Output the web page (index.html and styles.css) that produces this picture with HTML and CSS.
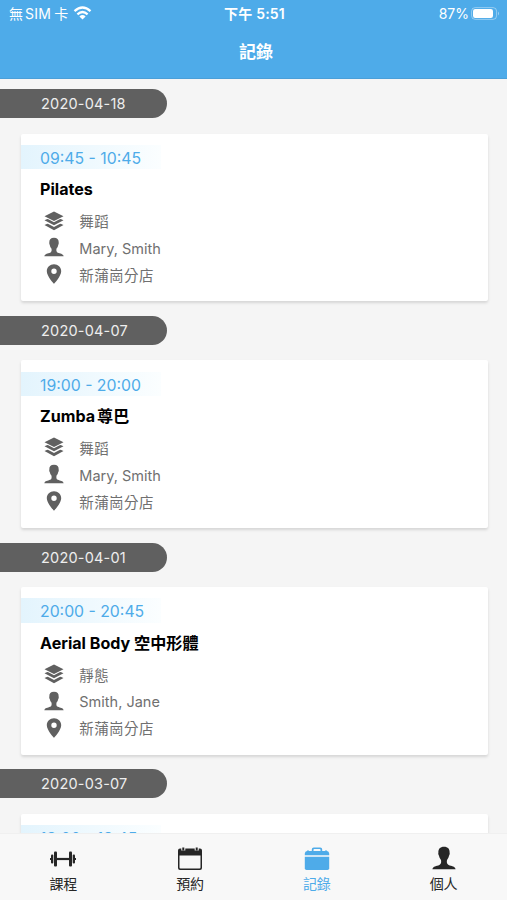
FILE: index.html
```
<!DOCTYPE html>
<html lang="zh-Hant">
<head>
    <meta charset="UTF-8">
    <meta name="viewport" content="width=device-width, initial-scale=1.0">
    <title>記錄</title>
    <link rel="stylesheet" href="styles.css">
</head>
<body>
    <svg class="sprite" width="0" height="0">
        <symbol id="icon-layers" viewBox="0 0 20 20">
            <path d="M10 .5 19.500 5.300 10 10.100 .5 5.300z"/>
            <path d="M.5 9.300 3.300 8Q5 8.300 10 11.200Q15 8.300 16.700 8L19.500 9.300 10 14.300z"/>
            <path d="M.5 14 3.300 12.700Q5 13 10 15.900Q15 13 16.700 12.700L19.500 14 10 19.200z"/>
        </symbol>
        <symbol id="icon-person" viewBox="0 0 24 24">
            <path d="M12 .8C8 .8 6.200 3.200 6.400 6.500C6 7.500 6.500 9 7 9.800C7.400 12 8.400 13 9 14C9.400 16.300 9.200 18 7.400 18.900C4.500 20.200 1 19.900 .4 23.200H23.600C23 19.900 19.500 20.200 16.600 18.900C14.800 18 14.600 16.300 15 14C15.600 13 16.600 12 17 9.800C17.500 9 18 7.500 17.600 6.500C17.800 3.200 16 .8 12 .8z"/>
        </symbol>
        <symbol id="icon-pin" viewBox="0 0 20 20">
            <path fill-rule="evenodd" d="M10 .3C6 .3 2.800 3.400 2.800 7.200C2.800 12.300 10 19.700 10 19.700S17.200 12.300 17.200 7.200C17.200 3.400 14 .3 10 .3zM10 4.500a2.700 2.700 0 1 1 0 5.400a2.700 2.700 0 1 1 0-5.400z"/>
        </symbol>
    </svg>

    <header class="header">
        <div class="status-bar">
            <div class="carrier">
                <span class="carrier-name">無<span class="sim">SIM</span>卡</span>
                <svg class="wifi" viewBox="0 0 18 14">
                    <path d="M1 5.200Q9-2.100 17 5.200M3.900 8.300Q9 3.700 14.100 8.300" fill="none" stroke="#fff" stroke-width="2.300"/>
                    <path d="M9 13.500 5.900 10.400Q9 7.700 12.100 10.400z" fill="#fff"/>
                </svg>
            </div>
            <div class="clock">下午 5:51</div>
            <div class="battery">
                <span>87%</span>
                <svg class="battery-icon" viewBox="0 0 29 13">
                    <rect x=".6" y=".6" width="25" height="11.800" rx="3.600" fill="none" stroke="#fff" stroke-opacity=".4"/>
                    <rect x="2" y="2" width="20" height="9" rx="2.200" fill="#fff"/>
                    <path d="M27 4.500Q29 6.500 27 8.500z" fill="#fff" fill-opacity=".45"/>
                </svg>
            </div>
        </div>
        <h1 class="page-title">記錄</h1>
    </header>

    <main class="records">
        <section class="record">
            <div class="date">2020-04-18</div>
            <div class="card">
                <div class="time">09:45 - 10:45</div>
                <h2 class="name">Pilates</h2>
                <ul class="details">
                    <li><svg><use href="#icon-layers"/></svg><span class="zh">舞蹈</span></li>
                    <li><svg><use href="#icon-person"/></svg><span class="en">Mary, Smith</span></li>
                    <li><svg><use href="#icon-pin"/></svg><span class="zh">新蒲崗分店</span></li>
                </ul>
            </div>
        </section>
        <section class="record">
            <div class="date">2020-04-07</div>
            <div class="card">
                <div class="time">19:00 - 20:00</div>
                <h2 class="name">Zumba<span class="name-zh">尊巴</span></h2>
                <ul class="details">
                    <li><svg><use href="#icon-layers"/></svg><span class="zh">舞蹈</span></li>
                    <li><svg><use href="#icon-person"/></svg><span class="en">Mary, Smith</span></li>
                    <li><svg><use href="#icon-pin"/></svg><span class="zh">新蒲崗分店</span></li>
                </ul>
            </div>
        </section>
        <section class="record">
            <div class="date">2020-04-01</div>
            <div class="card">
                <div class="time">20:00 - 20:45</div>
                <h2 class="name">Aerial Body 空中形體</h2>
                <ul class="details">
                    <li><svg><use href="#icon-layers"/></svg><span class="zh">靜態</span></li>
                    <li><svg><use href="#icon-person"/></svg><span class="en">Smith, Jane</span></li>
                    <li><svg><use href="#icon-pin"/></svg><span class="zh">新蒲崗分店</span></li>
                </ul>
            </div>
        </section>
        <section class="record">
            <div class="date">2020-03-07</div>
            <div class="card">
                <div class="time">18:00 - 18:45</div>
            </div>
        </section>
    </main>

    <nav class="tab-bar">
        <a class="tab">
            <svg viewBox="0 0 28 26">
                <path d="M7 13H21" fill="none" stroke="currentColor" stroke-width="2.200"/>
                <rect x="5" y="5.500" width="3" height="15" rx="1"/>
                <rect x="20" y="5.500" width="3" height="15" rx="1"/>
                <rect x="2" y="8.500" width="2.300" height="9" rx="1"/>
                <rect x="23.700" y="8.500" width="2.300" height="9" rx="1"/>
                <rect x="1" y="12" width="1.500" height="2"/>
                <rect x="25.500" y="12" width="1.500" height="2"/>
            </svg>
            <span>課程</span>
        </a>
        <a class="tab">
            <svg viewBox="0 0 28 26">
                <path fill-rule="evenodd" d="M4 2.500H24Q26 2.500 26 4.500V22Q26 24 24 24H4Q2 24 2 22V4.500Q2 2.500 4 2.500zM3.500 9.500V21.500Q3.500 22.500 4.500 22.500H23.500Q24.500 22.500 24.500 21.500V9.500z"/>
                <path d="M7.300 1.500V4.500M20.700 1.500V4.500" stroke="#f8f8f8" stroke-width="4"/>
                <path d="M7.300 1.500V4.500M20.700 1.500V4.500" stroke="currentColor" stroke-width="2"/>
            </svg>
            <span>預約</span>
        </a>
        <a class="tab active">
            <svg viewBox="0 0 28 26">
                <path d="M1.800 9.300V7.500Q2 5.300 4 5V4.500H6V5H8.800V3.500Q8.800 1.500 10.800 1.500H17.200Q19.200 1.500 19.200 3.500V5H22V4.500H24V5Q26 5.300 26.200 7.500V9.300zM10.500 5H17.500V3.800Q17.500 3 16.700 3H11.300Q10.500 3 10.500 3.800z" fill-rule="evenodd"/>
                <path d="M1.800 10.800H26.200V22.300Q26.200 24 24.500 24H3.500Q1.800 24 1.800 22.300z"/>
            </svg>
            <span>記錄</span>
        </a>
        <a class="tab">
            <svg viewBox="-1 0 26 26"><use href="#icon-person" width="24" height="24"/></svg>
            <span>個人</span>
        </a>
    </nav>
</body>
</html>
```

FILE: styles.css
```
* {
    box-sizing: border-box;
}
body {
    margin: 0;
    height: 100vh;
    display: flex;
    flex-direction: column;
    overflow: hidden;
    background: #f5f5f5;
    font-family: Inter, "Noto Sans CJK TC", sans-serif;
}
.sprite {
    display: none;
}
.header {
    flex: none;
    height: 79px;
    background: #4eabe9;
    border-bottom: 1px solid #4b9fd8;
    color: white;
}
.status-bar {
    display: grid;
    grid-template-columns: 1fr auto 1fr;
    align-items: center;
    height: 26px;
    padding: 0 7px 0 9px;
    font-size: 14px;
}
.carrier {
    display: flex;
    align-items: center;
    gap: 5px;
}
.sim {
    margin: 0 3px 0 2px;
    letter-spacing: 0.3px;
}
.wifi {
    width: 19px;
    height: 14px;
}
.clock {
    font-weight: 600;
    letter-spacing: 0.2px;
}
.battery {
    display: flex;
    align-items: center;
    justify-content: flex-end;
    gap: 2px;
}
.battery-icon {
    width: 29px;
    height: 13px;
}
.page-title {
    margin: 0;
    padding-left: 5px;
    font-size: 17px;
    font-weight: 600;
    line-height: 52px;
    text-align: center;
}
.records {
    flex: 1;
    min-height: 0;
    overflow: hidden;
    padding-top: 10px;
}
.record {
    height: 226.8px;
}
.date {
    width: 167px;
    height: 29px;
    padding-left: 41px;
    border-radius: 0 15px 15px 0;
    background: #606060;
    color: #eee;
    font-size: 14.5px;
    letter-spacing: 0.2px;
    line-height: 29px;
}
.card {
    height: 167.500px;
    margin: 15.500px 19.500px 0 20.500px;
    padding-top: 11.300px;
    border-radius: 2px;
    background: white;
    box-shadow: 0 2px 3px rgba(0, 0, 0, 0.13);
}
.time {
    width: 140px;
    height: 24.500px;
    padding-left: 19.500px;
    background: linear-gradient(90deg, #e3f4fd, #fbfeff);
    color: #4eabe9;
    font-size: 15.800px;
    line-height: 27px;
    white-space: nowrap;
}
.name {
    margin: 0;
    height: 38px;
    padding-left: 19.500px;
    font-size: 16.100px;
    font-weight: 700;
    line-height: 40.400px;
    white-space: nowrap;
}
.name-zh {
    margin-left: 2px;
}
.details {
    margin: 0;
    padding: 0 0 0 24px;
    list-style: none;
    color: #707070;
    font-size: 14.500px;
}
.details li {
    display: flex;
    align-items: center;
    gap: 15px;
    height: 26.800px;
}
.details .zh {
    letter-spacing: 0.4px;
}
.details .en {
    padding-top: 1.500px;
}
.details svg {
    width: 20px;
    height: 20px;
    margin-left: -0.2px;
    fill: #606060;
}
.tab-bar {
    flex: none;
    display: flex;
    height: 67px;
    border-top: 1px solid #f0f0f0;
    background: #f8f8f8;
}
.tab {
    flex: 1;
    display: flex;
    flex-direction: column;
    align-items: center;
    padding-top: 12px;
    color: #262626;
    font-size: 14px;
    line-height: 24px;
}
.tab svg {
    width: 28px;
    height: 26px;
    fill: currentColor;
}
.tab.active {
    color: #4eabe9;
}
```
